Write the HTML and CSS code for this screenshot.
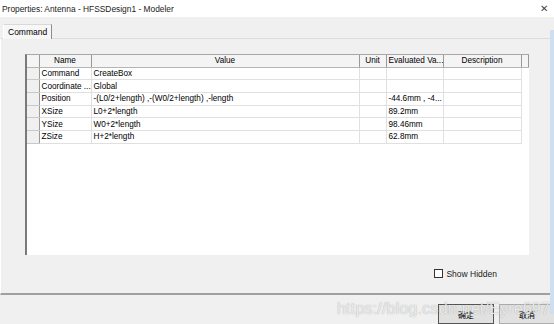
FILE: index.html
```html
<!DOCTYPE html>
<html>
    <head>
        <title>Properties: Antenna - HFSSDesign1 - Modeler</title>
        <link rel="stylesheet" href="styles.css">
    </head>
    <body>
        <div id="titlebar">
            <span>Properties: Antenna - HFSSDesign1 - Modeler</span>
            <span class="close">&#x2715;</span>
        </div>
        <div id="dialog">
            <div id="main">
                <div class="tabs">
                    <div class="tab">Command</div>
                </div>
                <div class="panel">
                    <div class="grid">
                        <table>
                            <colgroup>
                                <col style="width:12px">
                                <col style="width:52px">
                                <col style="width:268px">
                                <col style="width:27px">
                                <col style="width:57px">
                                <col style="width:78px">
                                <col>
                            </colgroup>
                            <tr class="head">
                                <th class="rh"></th>
                                <th>Name</th>
                                <th>Value</th>
                                <th>Unit</th>
                                <th class="left">Evaluated Va...</th>
                                <th>Description</th>
                                <th class="fill"></th>
                            </tr>
                            <tr><td class="rh"></td><td>Command</td><td>CreateBox</td><td></td><td></td><td></td></tr>
                            <tr><td class="rh"></td><td>Coordinate ...</td><td>Global</td><td></td><td></td><td></td></tr>
                            <tr><td class="rh"></td><td>Position</td><td>-(L0/2+length) ,-(W0/2+length) ,-length</td><td></td><td>-44.6mm , -4...</td><td></td></tr>
                            <tr><td class="rh"></td><td>XSize</td><td>L0+2*length</td><td></td><td>89.2mm</td><td></td></tr>
                            <tr><td class="rh"></td><td>YSize</td><td>W0+2*length</td><td></td><td>98.46mm</td><td></td></tr>
                            <tr><td class="rh"></td><td>ZSize</td><td>H+2*length</td><td></td><td>62.8mm</td><td></td></tr>
                        </table>
                    </div>
                    <div class="options">
                        <label><span class="check"></span>Show Hidden</label>
                    </div>
                </div>
                <div class="buttons">
                    <button class="default">确定</button>
                    <button>取消</button>
                </div>
            </div>
            <div class="strip"></div>
        </div>
        <div class="watermark">https://blog.csdn.net/Eyre697</div>
    </body>
</html>
```
FILE: styles.css
```css
body {
    margin: 0;
    width: 554px;
    height: 324px;
    overflow: hidden;
    position: relative;
    font-family: "Liberation Sans", "Noto Sans CJK SC", sans-serif;
    font-size: 8.2px;
    color: #000;
    background-color: #f0f0f0;
}

#titlebar {
    height: 17px;
    background-color: #fff;
    display: flex;
    justify-content: space-between;
    align-items: center;
    padding: 0 6px 0 2px;
    font-size: 8.4px;
    color: #222;
}

#titlebar .close {
    font-size: 10px;
    color: #444;
}

#dialog {
    display: flex;
    height: 307px;
}

#main {
    flex: 1;
    display: flex;
    flex-direction: column;
}

.strip {
    width: 4px;
    margin-top: 13px;
    height: 284px;
    background-color: #cddff0;
}

.tabs {
    height: 21px;
    padding-left: 3px;
    display: flex;
    align-items: flex-end;
}

.tab {
    height: 14px;
    line-height: 14px;
    padding: 0 4px;
    background-color: #f7f7f7;
    border-top: 1px solid #d9d9d9;
    border-left: 1px solid #fff;
    border-right: 1px solid #8c8c8c;
    margin-bottom: -1px;
    position: relative;
    z-index: 1;
    font-size: 8.5px;
}

.panel {
    height: 260px;
    border-top: 1px solid #dcdcdc;
    border-left: 1px solid #fff;
    border-bottom: 2px solid #a0a0a0;
    padding: 15px 0 0 24px;
    box-sizing: border-box;
}

.grid {
    width: 504px;
    height: 201px;
    background-color: #fff;
    border-left: 2px solid #7a7a7a;
    border-top: 1px solid #a8a8a8;
    box-sizing: border-box;
}

table {
    border-collapse: collapse;
    table-layout: fixed;
    width: 502px;
}

th, td {
    padding: 0 2px;
    white-space: nowrap;
    overflow: hidden;
    text-align: left;
    font-weight: normal;
}

tr.head th {
    height: 12px;
    text-align: center;
    background-color: #f4f4f4;
    border-right: 1px solid #999;
    border-bottom: 1px solid #b5b5b5;
}

tr.head th.left {
    text-align: left;
}

td {
    height: 11.67px;
    border-right: 1px solid #e0e0e0;
    border-bottom: 1px solid #e0e0e0;
}

.rh {
    background-color: #f0f0f0;
}

td.rh {
    border-right: 1px solid #9a9a9a;
    border-bottom: 1px solid #c8c8c8;
}

th.rh {
    border-right: 1px solid #9a9a9a;
}

.options {
    display: flex;
    justify-content: flex-end;
    padding: 14px 53px 0 0;
}

.options label {
    display: flex;
    align-items: center;
    gap: 3px;
    font-size: 8.5px;
    color: #222;
}

.check {
    width: 7px;
    height: 7px;
    border: 1px solid #333;
    background-color: #fff;
}

.buttons {
    display: flex;
    justify-content: flex-end;
    gap: 5px;
    padding-top: 9px;
    margin-right: -5px;
}

button {
    width: 56px;
    height: 20px;
    font-family: "Noto Sans CJK SC", sans-serif;
    font-size: 8px;
    background-color: #e1e1e1;
    border: 1px solid #adadad;
    padding: 0;
}

button.default {
    border: 1px solid #555;
}

.watermark {
    position: absolute;
    left: 337px;
    top: 300px;
    font-family: "Liberation Sans", sans-serif;
    font-size: 16px;
    color: rgba(255, 255, 255, 0.8);
    text-shadow: 0 0 1px rgba(110, 110, 110, 0.7);
    letter-spacing: 0.2px;
}
```
